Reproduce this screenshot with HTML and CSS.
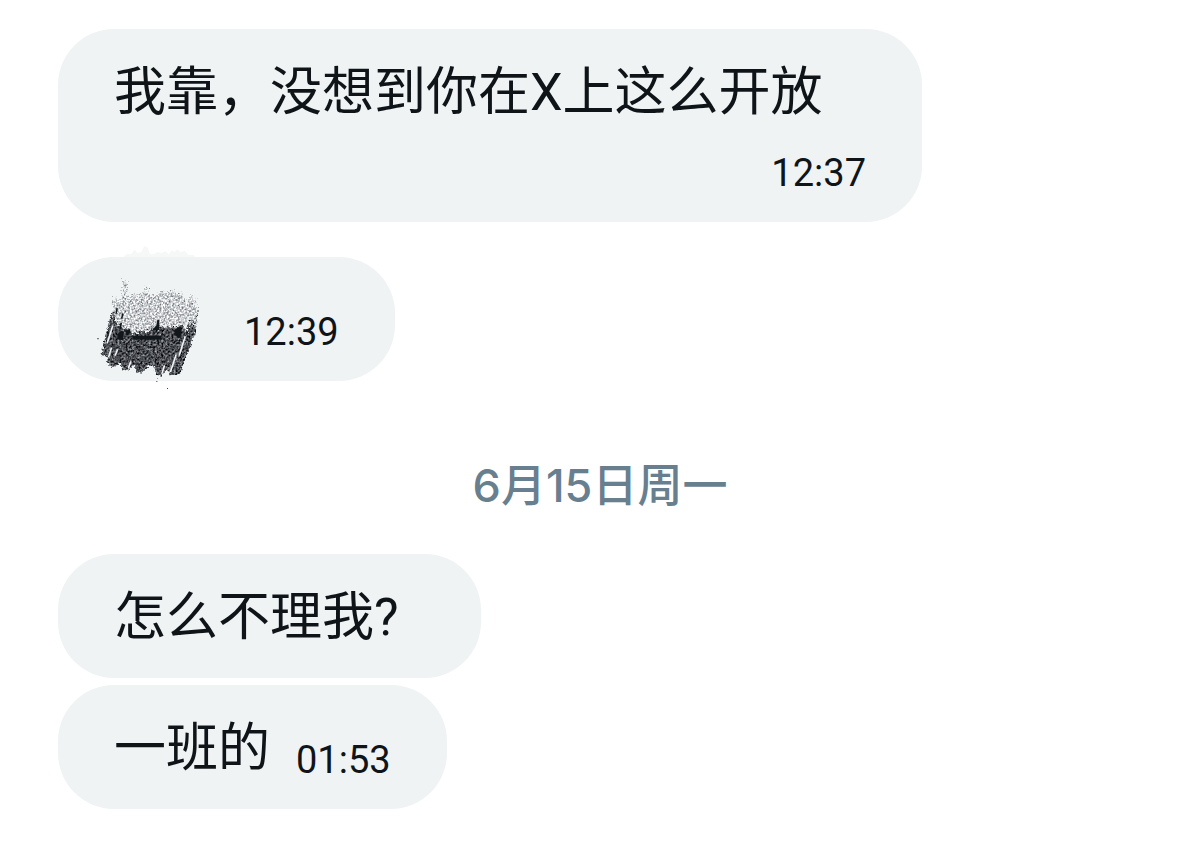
FILE: index.html
```
<!DOCTYPE html>
<html lang="zh-Hans">
<head>
    <meta charset="UTF-8">
    <meta name="viewport" content="width=device-width, initial-scale=1.0">
    <title>私信</title>
    <link rel="stylesheet" href="styles.css">
</head>
<body>
    <main class="chat">
        <div class="bubble">
            <span class="text">我靠，没想到你在X上这么开放</span>
            <time class="time">12:37</time>
        </div>

        <div class="bubble spaced">
            <span class="hidden-word"></span>
            <time class="time">12:39</time>
            <svg class="scribble" viewBox="0 0 420 480" aria-hidden="true">
                <defs>
                    <filter id="dark" x="0" y="0" width="420" height="480" filterUnits="userSpaceOnUse" color-interpolation-filters="sRGB">
                        <feTurbulence type="fractalNoise" baseFrequency="0.16" numOctaves="2" seed="4" result="n"/>
                        <feColorMatrix in="n" type="matrix" values="1.1 0 0 0 -0.26  1.1 0 0 0 -0.25  1.1 0 0 0 -0.23  0 0 0 0 1" result="g"/>
                        <feDisplacementMap in="SourceGraphic" in2="n" scale="14" xChannelSelector="G" yChannelSelector="B" result="d"/>
                        <feComposite in="g" in2="d" operator="in"/>
                    </filter>
                    <filter id="light" x="0" y="0" width="420" height="480" filterUnits="userSpaceOnUse" color-interpolation-filters="sRGB">
                        <feTurbulence type="fractalNoise" baseFrequency="0.18" numOctaves="2" seed="9" result="n"/>
                        <feColorMatrix in="n" type="matrix" values="1.2 0 0 0 0.19  1.2 0 0 0 0.2  1.2 0 0 0 0.21  0 0 0 0 1" result="g"/>
                        <feDisplacementMap in="SourceGraphic" in2="n" scale="34" xChannelSelector="G" yChannelSelector="B" result="d"/>
                        <feComposite in="g" in2="d" operator="in"/>
                    </filter>
                </defs>
                <!-- faint strokes above the bubble -->
                <path fill="#f6f8f8" d="M130 51l12-10 10 2 12-14 8 10 12-3 8-17 10 2 8 20 12 2 10-8 12 4 14-5 8 9 10-12 8 5 8-8 10 9 12-5 10 12 16 1 6 6z"/>
                <!-- lower dark strokes -->
                <g filter="url(#dark)">
                    <path fill="#333" d="M94 218L112 205 128 252 160 270 210 258 270 262 310 250 338 215 352 222 344 285 312 365 300 402 268 406 264 384 244 408 228 404 222 376 205 378 184 398 170 396 162 372 142 392 126 388 122 370 98 382 82 368 82 350 64 346 76 290z"/>
                </g>
                <g filter="url(#light)">
                    <path fill="#ccc" d="M98 188L108 172 120 182 130 160 129 124 141 126 142 176 155 166 190 160 196 140 204 142 204 164 228 170 242 150 254 158 282 150 292 166 306 156 312 180 320 190 332 164 343 170 346 198 354 218 344 264 334 240 320 276 306 254 286 262 252 258 236 268 215 262 205 280 180 272 160 282 138 270 112 252 102 228z"/>
                </g>
                <!-- gaps between the strokes -->
                <g stroke="#eff3f4" stroke-width="5" stroke-linecap="round">
                    <path d="M98 258L82 308M94 325L86 350M326 232L316 266M315 291L298 345M288 345L272 394M253 378L246 400M152 366L146 382M112 330L106 345"/>
                </g>
                <!-- what shows through of the word -->
                <g fill="#11171b">
                    <path d="M157 287h88v12h-88z"/>
                    <path d="M112 282l13-10 7 4-4 24-16-3zM135 274l15-8 3 14-13 4zM217 270l12-14 3-16 6-1v32zM285 268l18-9 2 24-8 13-12-12z"/>
                    <path d="M121 248l5 1-3 19-5-1zM109 204l5 1-4 18-4-2zM126 220l5 1-4 16-4-2z"/>
                </g>
                <g fill="#444">
                    <path d="M52 294h4v4h-4zM229 423h3v3h-3zM261 444h3v3h-3zM231 414h2v2h-2zM352 211h4v4h-4z"/>
                </g>
            </svg>
        </div>

        <h2 class="date">6月15日周一</h2>

        <div class="bubble">
            <span class="text">怎么不理我?</span>
            <span class="time"></span>
        </div>
        <div class="bubble grouped">
            <span class="text">一班的</span>
            <time class="time">01:53</time>
        </div>
    </main>
</body>
</html>
```
FILE: styles.css
```
body {
    margin: 0;
    background: #fff;
    color: #0f1419;
    font-family: Roboto, "Noto Sans CJK SC", sans-serif;
}
.chat {
    display: flex;
    flex-direction: column;
    align-items: flex-start;
    padding: 29px 0 48px 58px;
}
.bubble {
    position: relative;
    box-sizing: border-box;
    display: flex;
    flex-wrap: wrap;
    align-items: flex-end;
    column-gap: 26px;
    max-width: 864px;
    padding: 28px 56px 24px;
    border-radius: 56px;
    background: #eff3f4;
}
.spaced {
    margin-top: 35px;
}
.grouped {
    margin-top: 7px;
}
.text {
    font-size: 52px;
    line-height: 72px;
}
.time {
    margin-left: auto;
    padding-top: 19px;
    font-size: 38px;
    line-height: 50px;
}
.hidden-word {
    width: 104px;
    height: 72px;
}
.scribble {
    position: absolute;
    left: 22px;
    top: -17px;
    width: 140px;
    height: 160px;
}
.date {
    align-self: stretch;
    margin: 75px 58px 38px 0;
    color: #687f8f;
    font-family: Inter, "Noto Sans CJK SC", sans-serif;
    font-size: 45px;
    font-weight: 500;
    line-height: 60px;
    text-align: center;
}
```
